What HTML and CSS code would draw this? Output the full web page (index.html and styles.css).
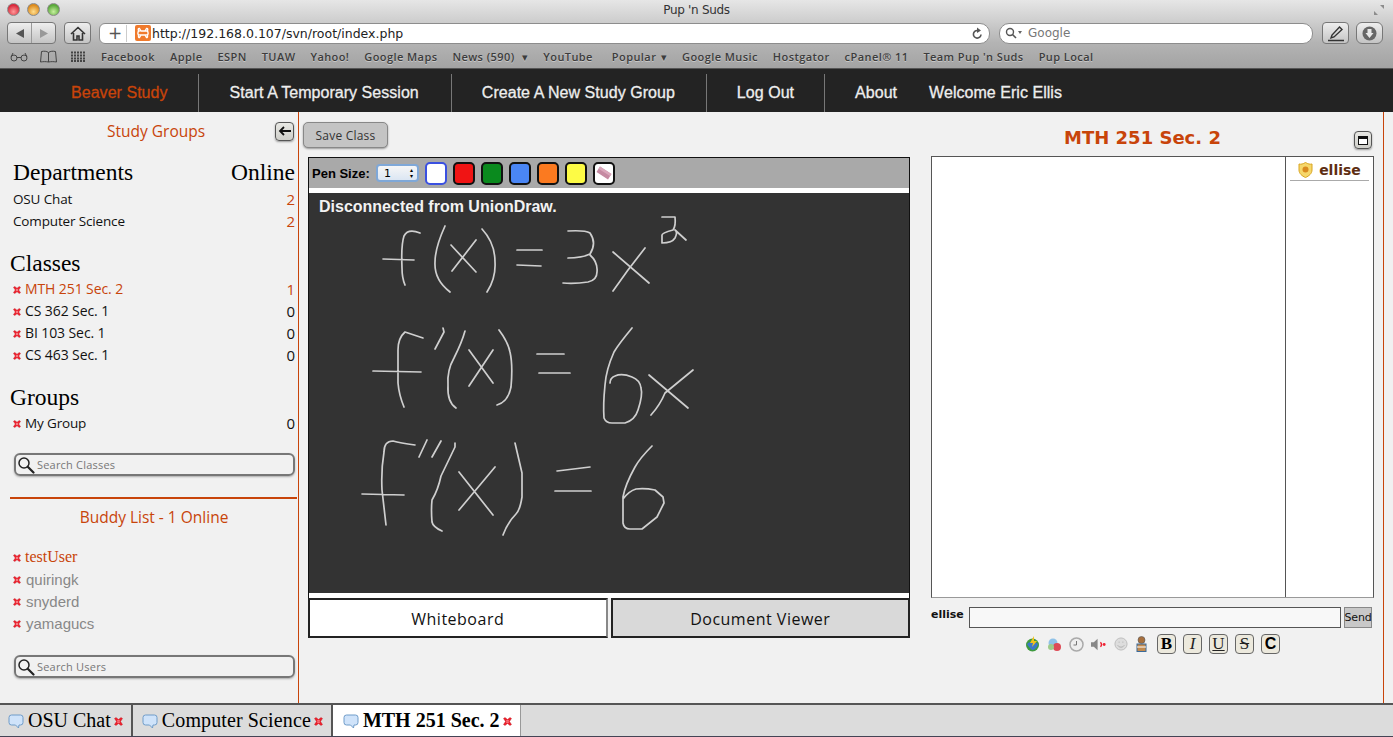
FILE: index.html
```html
<!DOCTYPE html>
<html lang="en">
<head>
<meta charset="utf-8">
<title>Pup 'n Suds</title>
<link rel="stylesheet" href="styles.css">
</head>
<body>
<svg class="defs" width="0" height="0" aria-hidden="true">
  <symbol id="x" viewBox="0 0 9 9"><path d="M.5 1.500 2 .5 4.500 2.500 7 .5 8.500 1.500 6.500 4.500 8.500 7.500 7 8.500 4.500 6.500 2 8.500.5 7.500 2.500 4.500Z" fill="#ee1f2c" stroke="#b8141c" stroke-width=".4"/><path d="M3.200 3.800h2.600M3.200 5.200h2.600" stroke="#ffc8c8" stroke-width=".7"/></symbol>
  <symbol id="bubble" viewBox="0 0 16 16"><path d="M3.500 2h9A2.500 2.500 0 0 1 15 4.500v5A2.500 2.500 0 0 1 12.500 12H11l-.5 3-3-3h-4A2.500 2.500 0 0 1 1 9.500v-5A2.500 2.500 0 0 1 3.500 2Z" fill="#cfe3fa" stroke="#6f9cc9"/></symbol>
  <symbol id="mag" viewBox="0 0 18 18"><circle cx="7" cy="7" r="5" fill="none" stroke="#222" stroke-width="1.500"/><path d="M11 11l5.500 5.500" stroke="#222" stroke-width="2.200" stroke-linecap="round"/></symbol>
</svg>

<header class="chrome">
  <div class="title-row">
    <div class="lights"><i class="light red"></i><i class="light amber"></i><i class="light green"></i></div>
    <span class="win-title">Pup 'n Suds</span>
    <svg class="expand" width="12" height="12" viewBox="0 0 12 12"><path d="M7 1h4v4ZM1 7v4h4Z" fill="#8c8c8c"/></svg>
  </div>
  <div class="tool-row">
    <div class="seg">
      <span class="seg-half"><svg width="10" height="11" viewBox="0 0 10 11"><path d="M9 1v9L1 5.500Z" fill="#555"/></svg></span>
      <span class="seg-half"><svg width="10" height="11" viewBox="0 0 10 11"><path d="M1 1v9l8-4.500Z" fill="#999"/></svg></span>
    </div>
    <span class="tbtn home"><svg width="16" height="15" viewBox="0 0 16 15"><path d="M1 8 8 1.500 15 8M3.500 7v7h3.500v-4h2v4h3.500V7" fill="none" stroke="#333" stroke-width="1.600"/></svg></span>
    <div class="address">
      <span class="plus">+</span>
      <svg class="favicon" width="16" height="16" viewBox="0 0 16 16"><rect width="16" height="16" rx="2" fill="#f07a2c"/><path d="M6 6 4.500 3.500C3 3 2.800 5.500 4 6c-1.500.5-1.500 4 0 4-1 .8-.5 3 .5 2.500L6 10h4l1.500 2.500c1 .5 1.500-1.700.5-2.500 1.500 0 1.500-3.500 0-4 1.200-.5 1-3-.5-2.500L10 6Z" fill="none" stroke="#fff" stroke-width="1.400"/></svg>
      <span class="url">http://192.168.0.107/svn/root/index.php</span>
      <svg class="reload" width="11" height="13" viewBox="0 0 11 13"><path d="M9 7.500A3.800 3.800 0 1 1 5.500 3.500" fill="none" stroke="#555" stroke-width="1.600"/><path d="M5 .5 9 3.500 5 6Z" fill="#555"/></svg>
    </div>
    <div class="search-bar">
      <svg width="18" height="12" viewBox="0 0 18 12"><circle cx="5" cy="5" r="3.500" fill="none" stroke="#555" stroke-width="1.400"/><path d="M7.500 7.500 11 11" stroke="#555" stroke-width="1.600"/><path d="M13 4h4l-2 3Z" fill="#666"/></svg>
      <span>Google</span>
    </div>
    <span class="tbtn note"><svg width="18" height="17" viewBox="0 0 18 17"><path d="M1 15.500h16M4 13l1-3L12.500 2l2.500 2.500L7 12Z" fill="none" stroke="#333" stroke-width="1.400"/></svg></span>
    <span class="tbtn dl"><svg width="15" height="15" viewBox="0 0 15 15"><circle cx="7.500" cy="7.500" r="7" fill="#666"/><path d="M5.500 3h4v4h2l-4 5-4-5h2Z" fill="#e8e8e8"/></svg></span>
  </div>
  <div class="bookmarks">
    <svg class="bk-ic" width="18" height="10" viewBox="0 0 18 10"><circle cx="4" cy="6" r="3" fill="none" stroke="#444"/><circle cx="14" cy="6" r="3" fill="none" stroke="#444"/><path d="M7 5.500h4M1 5 3 1M17 5l-2-4" fill="none" stroke="#444"/></svg>
    <svg class="bk-ic book" width="17" height="13" viewBox="0 0 17 13"><path d="M8.500 2.500C6.500 1 4 1 1.500 1.500l-1 10.500c3-.5 5.500-.5 8 0 2.500-.5 5-.5 8 0l-1-10.500C13 1 10.500 1 8.500 2.500Zm0 0V12" fill="none" stroke="#444"/></svg>
    <svg class="bk-ic grid" width="15" height="11" viewBox="0 0 15 11"><path d="M0 1.500h15M0 4.500h15M0 7.500h15M0 10h15" stroke="#444" stroke-width="2" stroke-dasharray="2 1"/></svg>
    <ul class="bk-list">
      <li>Facebook</li><li>Apple</li><li>ESPN</li><li>TUAW</li><li>Yahoo!</li><li>Google Maps</li>
      <li>News (590) <b class="caret wide">▾</b></li><li class="yt">YouTube</li><li>Popular <b class="caret">▾</b></li>
      <li>Google Music</li><li>Hostgator</li><li>cPanel® 11</li><li>Team Pup 'n Suds</li><li>Pup Local</li>
    </ul>
  </div>
</header>

<nav class="site-nav">
  <a class="nav-item brand">Beaver Study</a>
  <a class="nav-item">Start A Temporary Session</a>
  <a class="nav-item">Create A New Study Group</a>
  <a class="nav-item">Log Out</a>
  <a class="nav-item plain">About</a>
  <a class="nav-item plain welcome">Welcome Eric Ellis</a>
</nav>

<main class="app">
  <aside class="sidebar">
    <div class="side-head"><span class="accent-title">Study Groups</span><button class="mini-btn"><svg width="13" height="10" viewBox="0 0 13 10"><path d="M13 5H3M6 1 2 5l4 4" fill="none" stroke="#111" stroke-width="1.800"/></svg></button></div>
    <div class="list-head dept"><span>Departments</span><span>Online</span></div>
    <div class="row dept"><span>OSU Chat</span><span class="n on">2</span></div>
    <div class="row dept"><span>Computer Science</span><span class="n on">2</span></div>
    <div class="list-head sec"><span>Classes</span></div>
    <div class="row cls"><svg class="xi"><use href="#x"/></svg><span class="on">MTH 251 Sec. 2</span><span class="n on">1</span></div>
    <div class="row cls"><svg class="xi"><use href="#x"/></svg><span>CS 362 Sec. 1</span><span class="n">0</span></div>
    <div class="row cls"><svg class="xi"><use href="#x"/></svg><span>BI 103 Sec. 1</span><span class="n">0</span></div>
    <div class="row cls"><svg class="xi"><use href="#x"/></svg><span>CS 463 Sec. 1</span><span class="n">0</span></div>
    <div class="list-head sec"><span>Groups</span></div>
    <div class="row"><svg class="xi"><use href="#x"/></svg><span>My Group</span><span class="n">0</span></div>
    <div class="side-search first"><svg width="18" height="18"><use href="#mag"/></svg><span>Search Classes</span></div>
    <hr class="side-rule">
    <div class="buddy-title"><span class="accent-title">Buddy List - 1 Online</span></div>
    <div class="buddy me"><svg class="xi"><use href="#x"/></svg><span>testUser</span></div>
    <div class="buddy"><svg class="xi"><use href="#x"/></svg><span>quiringk</span></div>
    <div class="buddy"><svg class="xi"><use href="#x"/></svg><span>snyderd</span></div>
    <div class="buddy"><svg class="xi"><use href="#x"/></svg><span>yamagucs</span></div>
    <div class="side-search last"><svg width="18" height="18"><use href="#mag"/></svg><span>Search Users</span></div>
  </aside>

  <section class="board-col">
    <button class="save-btn">Save Class</button>
    <div class="board">
      <div class="pen-bar">
        <b class="pen-label">Pen Size:</b>
        <div class="pen-select"><span>1</span><span class="updown">▴<br>▾</span></div>
        <i class="swatch white"></i><i class="swatch red"></i><i class="swatch grn"></i><i class="swatch blue"></i><i class="swatch orange"></i><i class="swatch yellow"></i>
        <i class="swatch eraser"><svg width="18" height="16" viewBox="0 0 18 16"><path d="M5 1.500 16.500 9 13 14.500 1.500 7Z" fill="#c58aa2"/><path d="M5 1.500 16.500 9 15 11 3.500 3.800Z" fill="#d9a6ba"/></svg></i>
      </div>
      <div class="canvas">
        <div class="status">Disconnected from UnionDraw.</div>
        <svg class="ink" viewBox="309 193 600 400" width="600" height="400" fill="none" stroke="#cfcfcf" stroke-width="1.700" stroke-linejoin="round" stroke-linecap="round">
          <path d="M420 233Q408 228 404 236Q401 245 402 268Q402 278 405 285M383 259 414 260"/>
          <path d="M445 226Q435 248 435 262Q434 280 450 292M451 245 476 272M476 240 452 271"/>
          <path d="M482 229Q495 243 495 262Q496 278 487 292M517 250 542 250M517 265 541 266"/>
          <path d="M568 231Q585 230 590 233Q597 243 590 254Q582 258 568 258M590 255Q598 262 597 272Q597 280 588 282Q575 284 563 283"/>
          <path d="M613 252 649 283M645 248 628 270 613 291"/>
          <path d="M662 217 675 217Q676 226 673 230Q662 233 662 235L662 243Q672 243 675 238Q678 232 675 230L686 240"/>

          <path d="M423 338 405 332Q398 338 398 350L398 383Q399 395 404 407M373 371 421 372M443 328 444 332 435 349"/>
          <path d="M465 331Q462 342 454 358Q447 370 448 385Q447 402 456 408M469 350 493 383M493 350 469 386"/>
          <path d="M499 330Q508 342 510 352Q513 365 511 387Q508 402 497 405M537 354 564 354M539 373 570 373"/>
          <path d="M632 328Q618 345 614 352Q606 370 605 385Q603 405 604 418Q606 423 612 423L625 423Q635 420 638 410Q643 395 641 388Q640 380 632 377Q622 373 615 376Q610 378 610 383"/>
          <path d="M649 375 688 408M693 370 665 393Q660 405 651 415"/>

          <path d="M415 445Q400 443 393 441Q384 441 384 452Q381 470 382 490L386 525M362 494 404 495M427 440 419 457M441 441 432 457"/>
          <path d="M455 443 455 447 441 476Q438 490 432 500Q431 510 432 522Q433 527 442 531M459 472 493 515M495 467 459 510"/>
          <path d="M515 443 522 473 522 497Q520 510 516 514Q508 522 503 535M557 471 590 467M555 491 591 491"/>
          <path d="M652 446Q640 458 635 467Q625 485 623 497L623 523Q624 529 630 529L642 529 657 517 664 503 663 497 655 490Q645 488 636 489Q629 491 623 499"/>
        </svg>
      </div>
      <div class="board-tabs">
        <div class="btab active">Whiteboard</div>
        <div class="btab">Document Viewer</div>
      </div>
    </div>
  </section>

  <section class="chat-col">
    <div class="chat-head"><h1 class="chat-title">MTH 251 Sec. 2</h1><button class="mini-btn wide"><i class="win-ic"></i></button></div>
    <div class="chat-box">
      <div class="chat-log"></div>
      <div class="chat-users">
        <div class="chat-user"><svg width="15" height="16" viewBox="0 0 15 16"><path d="M1 2c2 .5 4 0 6.500-1.500C10 2 12 2.500 14 2v6c0 3.500-3 6-6.500 7.500C4 14 1 11.500 1 8Z" fill="#f6d76a" stroke="#d9a520"/><circle cx="7.500" cy="7.500" r="3" fill="#d98a1e"/></svg><b>ellise</b></div>
      </div>
    </div>
    <div class="chat-input">
      <b class="me-label">ellise</b>
      <div class="msg-field"></div>
      <div class="send">Send</div>
    </div>
    <div class="chat-tools">
      <svg width="15" height="16" viewBox="0 0 15 16"><circle cx="7.500" cy="9" r="6.500" fill="#3f9a3f"/><path d="M2 8c3-3 8-3 11 0-1 4-4 6-6 6C5 12 3 10 2 8Z" fill="#3a78c8"/><path d="M9 0 5 7h3l-1 4 5-6H9Z" fill="#f2c21a"/></svg>
      <svg width="15" height="15" viewBox="0 0 15 15"><circle cx="6" cy="6" r="4.500" fill="#8fc2e8"/><circle cx="10" cy="10" r="4" fill="#dd4a55"/><circle cx="4" cy="10" r="3" fill="#9ecb8a"/></svg>
      <svg width="15" height="15" viewBox="0 0 15 15"><circle cx="7.500" cy="7.500" r="6.500" fill="#eee" stroke="#aaa" stroke-width="1.500"/><path d="M7.500 4v4H4.500" fill="none" stroke="#777"/></svg>
      <svg width="16" height="13" viewBox="0 0 17 13"><path d="M0 4h3l4-3.500v12L3 9H0Z" fill="#888"/><path d="M10 4c1.500 1.500 1.500 3.500 0 5" fill="none" stroke="#e23" stroke-width="1.500"/><circle cx="14" cy="6.500" r="1.500" fill="#e23"/></svg>
      <svg width="14" height="14" viewBox="0 0 15 15"><circle cx="7.500" cy="7.500" r="6.500" fill="#ddd" stroke="#bbb"/><path d="M4 9c2 2.500 5 2.500 7 0M5 5.500h1M9 5.500h1" stroke="#aaa" fill="none"/></svg>
      <svg width="13" height="16" viewBox="0 0 13 16"><circle cx="6.500" cy="4" r="3.500" fill="#a76f3c" stroke="#555" stroke-width=".6"/><rect x="2" y="8" width="9" height="7.500" fill="#c28a4e" stroke="#3a6a9a"/><path d="M2 11h9" stroke="#fff"/></svg>
      <span class="fmt b">B</span><span class="fmt i">I</span><span class="fmt u">U</span><span class="fmt s">S</span><span class="fmt c">C</span>
    </div>
  </section>
</main>

<footer class="taskbar">
  <div class="ttab"><svg class="bub"><use href="#bubble"/></svg><span>OSU Chat</span><svg class="xi"><use href="#x"/></svg></div>
  <div class="ttab"><svg class="bub"><use href="#bubble"/></svg><span>Computer Science</span><svg class="xi"><use href="#x"/></svg></div>
  <div class="ttab active"><svg class="bub"><use href="#bubble"/></svg><span>MTH 251 Sec. 2</span><svg class="xi"><use href="#x"/></svg></div>
</footer>
</body>
</html>
```
FILE: styles.css
```css
* { box-sizing: border-box; }
html, body { margin: 0; height: 100%; }
body {
  width: 1393px; height: 737px; overflow: hidden;
  display: flex; flex-direction: column;
  background: #f1f1f1; color: #000;
  font-family: "Open Sans", "Liberation Sans", sans-serif;
}
.defs { position: absolute; }
button { font: inherit; padding: 0; cursor: pointer; }

/* Browser chrome */
.chrome {
  height: 69px; flex: none;
  background: linear-gradient(#e6e6e6, #cfcfcf 30%, #b4b4b4 62%, #a3a3a3);
  border-bottom: 1px solid #555;
  display: flex; flex-direction: column;
}
.title-row { height: 21px; flex: none; display: flex; align-items: center; justify-content: center; position: relative; }
.lights { position: absolute; left: 7px; top: 3px; display: flex; gap: 7px; }
.light { width: 13px; height: 13px; border-radius: 50%; border: 1px solid #8a8a8a; }
.light.red { background: radial-gradient(circle at 50% 70%, #ff9a9a, #d8283a 70%); }
.light.amber { background: radial-gradient(circle at 50% 70%, #ffdf90, #dc8a1c 70%); }
.light.green { background: radial-gradient(circle at 50% 70%, #c8f0a0, #58a838 70%); }
.win-title { font: 12px "DejaVu Sans", sans-serif; color: #333; letter-spacing: -.3px; margin-top: -2px; }
.expand { position: absolute; right: 8px; top: 4px; }
.tool-row { height: 24px; flex: none; display: flex; align-items: center; padding-left: 7px; }
.seg, .tbtn {
  height: 22px; border: 1px solid #777; border-radius: 4px;
  background: linear-gradient(#eee, #c4c4c4);
  display: flex; align-items: center; justify-content: center;
}
.seg { width: 49px; }
.seg-half { flex: 1; display: flex; justify-content: center; height: 100%; align-items: center; }
.seg-half + .seg-half { border-left: 1px solid #999; }
.home { width: 27px; margin-left: 8px; }
.address {
  width: 891px; height: 21px; margin-left: 8px; background: #fff;
  border: 1px solid #8d8d8d; border-radius: 6px 10px 10px 6px;
  display: flex; align-items: center; padding: 0 6px 0 8px;
}
.plus { font: 17px "DejaVu Sans", sans-serif; color: #555; width: 19px; border-right: 1px solid #ccc; line-height: 17px; height: 17px; }
.favicon { margin-left: 8px; }
.url { font: 12.500px "DejaVu Sans", sans-serif; color: #222; margin-left: 1px; flex: 1; }
.search-bar {
  width: 314px; height: 21px; margin-left: 9px; background: #fff;
  border: 1px solid #8d8d8d; border-radius: 10px;
  display: flex; align-items: center; gap: 5px; padding-left: 5px;
  font: 12px "DejaVu Sans", sans-serif; color: #777;
}
.note { width: 27px; margin-left: 9px; }
.dl { width: 27px; margin-left: 7px; border-radius: 6px; }
.bookmarks { height: 23px; flex: none; display: flex; align-items: center; padding-left: 10px; }
.bk-ic { flex: none; }
.book { margin-left: 12px; }
.grid { margin-left: 14px; }
.bk-list {
  list-style: none; margin: 0 0 0 15px; padding: 0; display: flex; gap: 15px;
  font: 600 11px "Open Sans", sans-serif; color: #3c3c3c; letter-spacing: .42px;
  text-shadow: 0 1px 0 #c8c8c8;
}
.caret { font-weight: 400; font-size: 11px; margin-left: 1px; }
.caret.wide { margin-left: 4px; }
.yt { padding-right: 4px; }

/* Site nav */
.site-nav {
  height: 43px; flex: none; background: #232323; display: flex;
  align-items: flex-end; padding-left: 41px;
  font: 16px "Liberation Sans", sans-serif; color: #eee;
  letter-spacing: .04px; -webkit-text-stroke: .3px #eee;
}
.nav-item { height: 38px; padding: 0 31px 0 30px; display: flex; align-items: center; border-right: 1px solid #777; }
.nav-item.brand { padding: 0 30px; }
.nav-item:nth-child(2) { padding: 0 32px 0 31px; }
.nav-item:nth-child(4) { padding-right: 30px; }
.nav-item.plain { border-right: 0; }
.nav-item.plain.welcome { padding-left: 1px; }
.brand { color: #c8440a; -webkit-text-stroke: .3px #c8440a; }

/* Main */
.app { flex: 1; display: flex; min-height: 0; }
.sidebar { width: 299px; flex: none; border-right: 1px solid #c8440a; font-size: 13.500px; }
.accent-title { color: #c8440a; font-size: 15.500px; }
.side-head { height: 38px; display: flex; align-items: center; justify-content: space-between; padding: 0 4px 0 107px; }
.mini-btn {
  width: 19px; height: 19px; border: 1px solid #555; border-radius: 4px;
  background: linear-gradient(#e8e8e4, #cfcfca); box-shadow: 0 1px 2px #999;
  display: flex; align-items: center; justify-content: center;
}
.list-head {
  height: 28px; margin-top: 8px; display: flex; justify-content: space-between; align-items: center;
  font: 23.500px "Liberation Serif", serif; padding: 0 3px 0 10px;
}
.list-head.dept { padding-left: 13px; margin-bottom: 2px; }
.list-head.sec { margin: 17px 0 1px; }
.row { height: 22px; display: flex; align-items: center; padding: 0 3px 1px 13px; color: #111; letter-spacing: -.15px; }
.row.cls { font-size: 14px; letter-spacing: -.1px; }
.row .n { margin-left: auto; font-size: 15px; }
.on { color: #c8440a; }
.xi { width: 8px; height: 8px; flex: none; margin-right: 4px; margin-top: 2px; }
.side-search {
  height: 23px; margin: 0 3px 0 14px; border: 2px solid #777; border-radius: 6px;
  display: flex; align-items: center; gap: 2px; padding-left: 1px;
  box-shadow: 0 1px 2px #aaa; font-size: 11px; color: #777; letter-spacing: .2px;
}
.side-search.first { margin-top: 19px; }
.side-search.last { margin-top: 21px; }
.side-rule { height: 2px; margin: 21px 1px 0 10px; border: 0; background: #c8440a; }
.buddy-title { height: 22px; margin-top: 7px; margin-bottom: 18px; text-align: center; padding-left: 10px; }
.buddy { height: 22px; padding-left: 13px; display: flex; align-items: center; font: 15px "Liberation Sans", sans-serif; color: #888; }
.buddy .xi { margin-right: 5px; }
.buddy.me { font: 16px "Liberation Serif", serif; color: #c8440a; }
.buddy.me .xi { margin-right: 4px; }

/* Board */
.board-col { width: 632px; flex: none; padding: 10px 0 0 4px; }
.save-btn {
  display: block; width: 85px; height: 26px; border: 1px solid #888; border-radius: 5px;
  background: #c4c4c4; box-shadow: 0 1px 2px #999; font-size: 12px; color: #333; letter-spacing: .2px;
}
.board { width: 602px; margin: 9px 0 0 5px; background: #fff; border: 1px solid #111; border-bottom: 0; }
.pen-bar { height: 30px; background: #a9a9a9; display: flex; align-items: center; gap: 6px; padding-left: 3px; }
.pen-label { font: bold 13px "Liberation Sans", sans-serif; width: 58px; flex: none; }
.pen-select {
  width: 43px; height: 18px; background: linear-gradient(#f6f6f6, #dbe6f3);
  border: 2px solid #7fa8d8; border-radius: 4px; display: flex; align-items: center; justify-content: space-between;
  padding: 0 4px 0 6px; font: 11px "DejaVu Sans", sans-serif;
}
.updown { font-size: 6px; line-height: 6px; }
.swatch { width: 22px; height: 23px; border: 2px solid #111; border-radius: 5px; display: flex; align-items: center; justify-content: center; }
.swatch.white { background: #fff; border-color: #3a50e0; }
.swatch.red { background: #f01414; }
.swatch.grn { background: #0a8a1e; }
.swatch.blue { background: #4a86f5; }
.swatch.orange { background: #fb7a20; }
.swatch.yellow { background: #fdfb45; }
.swatch.eraser { background: #fff; }
.canvas { height: 400px; margin-top: 5px; background: #333; position: relative; }
.status { position: absolute; left: 10px; top: 5px; font: bold 16px "Liberation Sans", sans-serif; color: #f2f2f2; }
.ink { display: block; }
.board-tabs { display: flex; gap: 3px; margin: 5px -1px 0; height: 40px; background: #f1f1f1; }
.btab {
  flex: 1; display: flex; align-items: center; justify-content: center; padding-top: 1px;
  border: 2px solid #222; background: #d9d9d9; font-size: 16px; font-weight: 500; letter-spacing: .5px; color: #111;
}
.btab.active { background: #fff; border-right: 2px solid #888; }

/* Chat */
.chat-col { width: 453px; flex: none; border-right: 1px solid #c8440a; display: flex; flex-direction: column; }
.chat-head { height: 44px; display: flex; align-items: center; justify-content: center; position: relative; padding: 7px 29px 0 0; }
.chat-title { margin: 0; font: bold 18px "DejaVu Sans", sans-serif; color: #c8440a; }
.mini-btn.wide { position: absolute; right: 11px; top: 19px; width: 18px; height: 18px; }
.win-ic { width: 10px; height: 9px; border: 1px solid #111; border-top-width: 3px; background: #fff; }
.chat-box { width: 443px; height: 442px; border: 1px solid #555; border-bottom-color: #999; display: flex; background: #fff; }
.chat-log { width: 354px; border-right: 1px solid #555; }
.chat-users { flex: 1; padding: 3px 4px 0; }
.chat-user { display: flex; align-items: center; justify-content: center; gap: 6px; height: 21px; border-bottom: 1px solid #aaa; font: bold 14px "DejaVu Sans", sans-serif; color: #5e2e12; }
.chat-input { display: flex; align-items: flex-start; margin-top: 9px; height: 21px; }
.me-label { font: bold 11px "DejaVu Sans", sans-serif; width: 38px; line-height: 15px; color: #111; }
.msg-field { width: 372px; height: 21px; border: 1px solid #555; background: #f8f8f8; }
.send { width: 28px; height: 21px; margin-left: 3px; border: 1px solid #888; background: #c8c8c8; font: 11px "DejaVu Sans", sans-serif; color: #111; display: flex; align-items: center; justify-content: center; letter-spacing: -.2px; }
.chat-tools { display: flex; align-items: center; gap: 7px; margin-top: 6px; padding-left: 94px; height: 20px; }
.fmt { width: 19px; height: 20px; border: 1px solid #666; border-radius: 4px; background: #ece9dd; display: flex; align-items: center; justify-content: center; font: 17px "Liberation Serif", serif; color: #222; }
.fmt.b { font-weight: bold; color: #000; margin-left: 2px; }
.fmt.i { font-style: italic; }
.fmt.u { text-decoration: underline; }
.fmt.s { text-decoration: line-through; }
.fmt.c { font: bold 16px "Liberation Sans", sans-serif; color: #000; }

/* Task bar */
.taskbar {
  height: 34px; flex: none; background: #dcdcdc; display: flex;
  border-top: 2px solid #555; border-bottom: 1px solid #445;
}
.ttab { display: flex; align-items: center; padding: 0 8px 0 9px; font: 20px "Liberation Serif", serif; border-right: 2px solid #555; gap: 4px; height: 100%; letter-spacing: .12px; }
.ttab:first-child { padding: 0 8px; letter-spacing: 0; }
.ttab .bub { width: 16px; height: 16px; }
.ttab .xi { margin: 2px 0 0 -1px; width: 9px; height: 9px; }
.ttab.active { background: #fff; font-weight: bold; padding-left: 10px; border-right: 1px solid #999; letter-spacing: 0; }
```
